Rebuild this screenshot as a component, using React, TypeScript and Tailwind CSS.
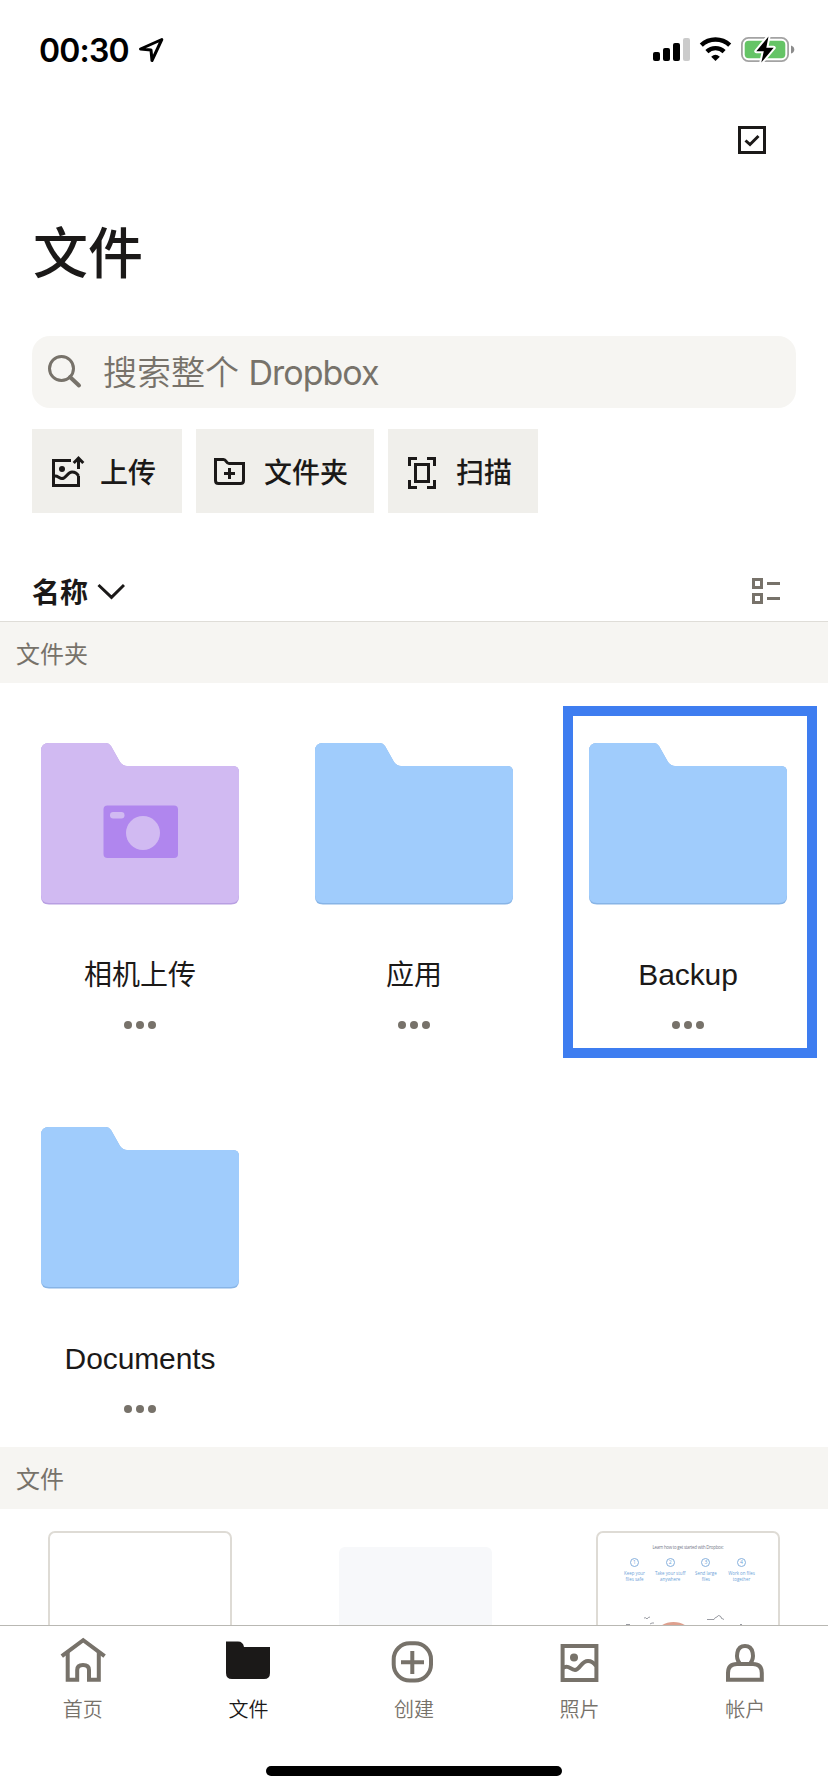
import type { ReactNode } from "react";

const CJK = "font-['Inter','Noto_Sans_CJK_SC',sans-serif]";
const HAN = "font-['Noto_Sans_CJK_SC',sans-serif]";

function StatusBar() {
  return (
    <header className="flex h-[100px] shrink-0 items-start justify-between pl-[39px] pr-8 pt-9 text-black">
      <div className="flex items-start">
        <span className="w-[91px] whitespace-nowrap pt-px font-['Inter',sans-serif] text-[32px] font-semibold leading-[28px] tracking-[-0.8px]">00:30</span>
        <svg className="ml-2 h-7 w-7" viewBox="138 36 28 28" fill="none" stroke="currentColor" strokeWidth="3" strokeLinejoin="round">
          <path d="M161.800 39.500 L152 60.500 L151 50 L140.500 49 Z" />
        </svg>
      </div>
      <svg className="h-7 w-36" viewBox="652 36 144 28">
        <rect x="653" y="52" width="7" height="9" rx="2" />
        <rect x="663" y="48" width="7" height="13" rx="2" />
        <rect x="673" y="43" width="7" height="18" rx="2" />
        <rect x="683" y="38" width="7" height="23" rx="2" fill="#cbcbcb" />
        <g fill="none" stroke="#000" strokeWidth="4.400">
          <path d="M701.300 45.200 A20.500 20.500 0 0 1 729.700 45.200" />
          <path d="M706.900 51.600 A12.500 12.500 0 0 1 724.100 51.600" />
        </g>
        <path d="M715.500 61 L711.200 56.700 Q715.500 52.700 719.800 56.700 Z" />
        <rect x="741.900" y="37.900" width="46.200" height="23.200" rx="6.500" fill="#fff" stroke="#a3a3a3" strokeWidth="1.800" />
        <rect x="744.700" y="40.700" width="40.600" height="17.600" rx="4" fill="#65c466" />
        <path d="M791 45.500 Q794.300 46.500 794.300 49.500 T791 53.500 Z" fill="#8c8c8c" />
        <path d="M768.500 36.500 L756.300 51.300 H763.800 L761.300 62.500 L773.700 47.700 H766.300 Z" fill="#000" stroke="#fff" strokeWidth="4" strokeLinejoin="round" paintOrder="stroke" />
      </svg>
    </header>
  );
}

function Action({ width, icon, label }: { width: string; icon: ReactNode; label: string }) {
  return (
    <button className={`flex h-[84px] ${width} items-center bg-[#f0efeb] pl-[18px] text-[#1b1918]`}>
      {icon}
      <span className={`ml-3.5 ${HAN} whitespace-nowrap text-[28px] font-medium leading-[36px]`}>{label}</span>
    </button>
  );
}

function Actions() {
  return (
    <div className="mt-[21px] flex gap-3.5 px-8">
      <Action
        width="w-[150px]"
        label="上传"
        icon={
          <svg className="h-9 w-9" viewBox="50 453 36 36" fill="none" stroke="currentColor" strokeWidth="3">
            <path d="M71 460.500 H53.500 V485.500 H78.500 V476" />
            <circle cx="62" cy="469" r="3" fill="currentColor" stroke="none" />
            <path d="M53.500 476.500 C57 474.500 59 478.500 62 478.500 C66 478.500 67.500 472 72 472 C75 472 77 473 78.500 476" />
            <path d="M78.500 469 V458.500 M73.700 463 L78.500 458.200 L83.300 463" />
          </svg>
        }
      />
      <Action
        width="w-[178px]"
        label="文件夹"
        icon={
          <svg className="h-9 w-9" viewBox="214 453 36 36" fill="none" stroke="currentColor" strokeWidth="3">
            <path d="M215.500 459.500 H223.500 C226.500 459.500 226 463.500 229 463.500 H243.500 V480.500 Q243.500 483.500 240.500 483.500 H218.500 Q215.500 483.500 215.500 480.500 Z" />
            <path d="M229.500 468 V479 M224 473.500 H235" />
          </svg>
        }
      />
      <Action
        width="w-[150px]"
        label="扫描"
        icon={
          <svg className="h-9 w-9" viewBox="406 453 36 36" fill="none" stroke="currentColor" strokeWidth="3">
            <path d="M409.500 466 V458.500 H417 M427 458.500 H434.500 V466 M434.500 480 V487.500 H427 M417 487.500 H409.500 V480" />
            <rect x="415.500" y="464.500" width="13" height="17" />
          </svg>
        }
      />
    </div>
  );
}

function SectionHeader({ height, children }: { height: string; children: ReactNode }) {
  return (
    <h2 className={`flex ${height} shrink-0 items-center bg-[#f6f5f2] pl-4 ${HAN} text-[24px] font-normal leading-[32px] text-[#77726a]`}>
      {children}
    </h2>
  );
}

const FOLDER = "M8 0 H65 Q68 0 70 3 L79 19 Q82 23 86 23 H192 Q198 23 198 29 V153.500 Q198 161.500 190 161.500 H8 Q0 161.500 0 153.500 V8 Q0 0 8 0 Z";

function Folder({ name, camera = false, latin = false, highlighted = false }: { name: string; camera?: boolean; latin?: boolean; highlighted?: boolean }) {
  return (
    <div className="relative flex h-[384px] w-[274px] flex-col items-center pt-[60px]">
      {highlighted && <div className="absolute left-[12px] top-[23px] h-[352px] w-[254px] border-[10px] border-[#3e7df0]" />}
      <svg className="h-[162px] w-[198px]" viewBox="0 0 198 162">
        <path d={FOLDER} fill={camera ? "#b89fe2" : "#87b4e6"} />
        <path d="M8 0 H65 Q68 0 70 3 L79 19 Q82 23 86 23 H192 Q198 23 198 29 V152 Q198 160 190 160 H8 Q0 160 0 152 V8 Q0 0 8 0 Z" fill={camera ? "#d1baf2" : "#a0ccfc"} />
        {camera && (
          <>
            <rect x="62.500" y="62.500" width="74.500" height="52.500" rx="4" fill="#b086ee" />
            <rect x="69" y="69" width="14.500" height="6.500" rx="3.200" fill="#d1baf2" />
            <circle cx="102" cy="90" r="17" fill="#d1baf2" />
          </>
        )}
      </svg>
      {latin ? (
        <span className="mt-[50px] h-10 whitespace-nowrap font-['Liberation_Sans',sans-serif] text-[30px] leading-[40px] tracking-[-0.1px] text-[#1b1918]">{name}</span>
      ) : (
        <span className={`mb-px mt-[49px] h-10 whitespace-nowrap ${HAN} text-[28px] leading-[39px] text-[#1b1918]`}>{name}</span>
      )}
      <div className="mt-[26px] flex gap-1">
        <i className="h-2 w-2 rounded-full bg-[#77726a]" />
        <i className="h-2 w-2 rounded-full bg-[#77726a]" />
        <i className="h-2 w-2 rounded-full bg-[#77726a]" />
      </div>
    </div>
  );
}

const STEPS = [
  ["1", "Keep your", "files safe"],
  ["2", "Take your stuff", "anywhere"],
  ["3", "Send large", "files"],
  ["4", "Work on files", "together"],
];

function Files() {
  return (
    <div className="flex h-[116px] shrink-0 items-start overflow-hidden px-[3px]">
      <div className="flex w-[274px] justify-center pt-[22px]">
        <div className="h-[240px] w-[184px] rounded-[7px] border-2 border-[#dedbd5]" />
      </div>
      <div className="flex w-[274px] justify-center pl-[3px] pt-[38px]">
        <div className="h-[200px] w-[153px] rounded-[6px] bg-[#f7f8fa]" />
      </div>
      <div className="flex w-[274px] justify-center pt-[22px]">
        <div className="flex h-[240px] w-[184px] flex-col items-center rounded-[7px] border-2 border-[#dedbd5] font-['Open_Sans',sans-serif]">
          <p className="mt-[10px] whitespace-nowrap text-[4.400px] leading-[8px] tracking-[-0.25px] text-[#767a8a]">Learn how to get started with Dropbox:</p>
          <div className="mt-[7px] flex">
            {STEPS.map(([n, a, b]) => (
              <div key={n} className="flex w-[35.700px] flex-col items-center whitespace-nowrap text-[4.400px] leading-[5.500px] text-[#6c9fd8]">
                <span className="mb-1 flex h-[9px] w-[9px] items-center justify-center rounded-full border border-[#86b0dd] text-[5px] leading-none">{n}</span>
                <span>{a}</span>
                <span>{b}</span>
              </div>
            ))}
          </div>
          <svg className="mt-[31px] h-5 w-[130px]" viewBox="622 1613 130 20" fill="none" stroke="#8f9198" strokeWidth="0.900">
            <path d="M643 1618 Q645 1617 646 1619 Q647 1617 649 1617 M649 1624 L651 1623 L653 1623 M706 1619.500 H713 Q714 1617 716 1617 Q717 1614.500 719 1616 Q721 1617 720 1618 L723 1619.500 M625 1624.500 H629 M739 1624.500 H741" />
            <ellipse cx="672.500" cy="1632" rx="16" ry="10" fill="#dea08e" stroke="none" />
          </svg>
        </div>
      </div>
    </div>
  );
}

function Tab({ label, active = false, children }: { label: string; active?: boolean; children: ReactNode }) {
  return (
    <button className={`flex flex-1 flex-col items-center pt-[10px] ${active ? "text-[#1b1918]" : "text-[#77726a]"}`}>
      <svg className="h-[48px] w-[48px]" viewBox="0 0 48 48" fill="none" stroke="currentColor" strokeWidth="4">
        {children}
      </svg>
      <span className={`mt-[11px] whitespace-nowrap ${HAN} text-[20px] font-[350] leading-[28px]`}>{label}</span>
    </button>
  );
}

export default function App() {
  return (
    <div className="flex h-[1792px] w-[828px] flex-col overflow-hidden bg-white">
      <StatusBar />
      <div className="flex h-[80px] shrink-0 justify-end pr-[62px] pt-[26px]">
        <svg className="h-7 w-7" viewBox="0 0 28 28" fill="none" stroke="#1b1918" strokeWidth="3">
          <rect x="1.500" y="1.500" width="25" height="25" />
          <path d="M7.500 14.500 L12 18.500 L20.500 10" />
        </svg>
      </div>
      <h1 className={`h-[156px] shrink-0 pl-[33px] pt-[33px] ${HAN} text-[55px] font-medium leading-[72px] text-[#1b1918]`}>文件</h1>
      <div className="mx-8 flex h-[72px] shrink-0 items-center rounded-[18px] bg-[#f6f5f2] pl-4 text-[#77726a]">
        <svg className="h-[34px] w-[34px]" viewBox="0 0 34 34" fill="none" stroke="currentColor" strokeWidth="3">
          <circle cx="13.500" cy="13.500" r="12" />
          <path d="M22 22 L31 30.500" strokeWidth="4" strokeLinecap="round" />
        </svg>
        <span className={`ml-[21px] whitespace-nowrap pt-0.5 ${CJK} text-[34px] font-[350] leading-[40px]`}>
          搜索整个 <span className="font-normal tracking-[-1px]">Dropbox</span>
        </span>
      </div>
      <Actions />
      <div className="flex h-[109px] shrink-0 items-end border-b border-[#dfddd8] pb-[10px] pl-8 pr-12">
        <span className={`${HAN} text-[28px] font-bold leading-[40px] text-[#1b1918]`}>名称</span>
        <svg className="mb-[7px] ml-[9px] h-[28px] w-[28px]" viewBox="0 0 28 28" fill="none" stroke="#1b1918" strokeWidth="3">
          <path d="M1.500 9 L14.500 21.300 L27 9" />
        </svg>
        <svg className="mb-[7px] ml-auto h-[26px] w-[28px]" viewBox="0 0 28 26" fill="none" stroke="#77726a" strokeWidth="3">
          <rect x="1.500" y="1.500" width="8" height="8" />
          <rect x="1.500" y="16.500" width="8" height="8" />
          <path d="M15 5.500 H28 M15 20.500 H28" />
        </svg>
      </div>
      <SectionHeader height="h-[61px]">文件夹</SectionHeader>
      <div className="flex h-[764px] shrink-0 flex-wrap content-start px-[3px]">
        <Folder name="相机上传" camera />
        <Folder name="应用" />
        <Folder name="Backup" latin highlighted />
        <Folder name="Documents" latin />
      </div>
      <SectionHeader height="h-[62px]">文件</SectionHeader>
      <Files />
      <nav className="flex h-[141px] shrink-0 border-t border-[#b9b8b3] bg-white">
        <Tab label="首页">
          <path d="M2.800 20.200 L24.200 4.200 L45.600 20.200" />
          <path d="M8.700 16 V43.700 H18.200 V34 Q18.200 29 24 29 Q30 29 30 34 V43.700 H39.800 V16" />
        </Tab>
        <Tab label="文件" active>
          <path d="M2 5.500 H14 Q19 5.500 20 11 H46 V37 Q46 43 40 43 H8 Q2 43 2 37 Z" fill="currentColor" stroke="none" />
        </Tab>
        <Tab label="创建">
          <rect x="3.700" y="7.300" width="37.300" height="37.300" rx="16" />
          <path d="M22.300 15 V38 M11 26.200 H34" />
        </Tab>
        <Tab label="照片">
          <rect x="6.600" y="10" width="33.800" height="34" />
          <circle cx="18" cy="21.500" r="4" fill="currentColor" stroke="none" />
          <path d="M6.600 32 C13 28 14 34 19 34 C24 34 25 25 32 25 C36 25 38 27 40 30" />
        </Tab>
        <Tab label="帐户">
          <path d="M18.500 27 C14.500 22 15 10 24 10 C33 10 33.500 22 29.500 27" />
          <path d="M7 43.800 V37 Q7 28 16 28 H32 Q40.800 28 40.800 37 V43.800 Z" />
        </Tab>
      </nav>
      <div className="flex h-[26px] shrink-0 items-start justify-center bg-white">
        <div className="h-[10px] w-[296px] rounded-full bg-black" />
      </div>
    </div>
  );
}
